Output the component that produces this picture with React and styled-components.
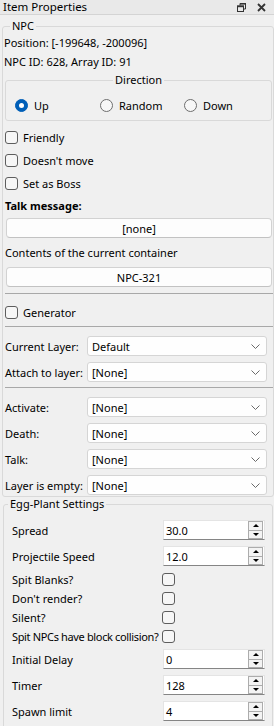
import React from 'react';
import styled, { createGlobalStyle } from 'styled-components';

const Global = createGlobalStyle`
  html, body { margin: 0; padding: 0; background: #f0f0f0; }
  body { font-family: "Noto Sans", "Open Sans", sans-serif; font-size: 11px; color: #000; }
  * { box-sizing: border-box; }
`;

const Panel = styled.div`
  width: 274px;
  height: 726px;
  overflow: hidden;
  background: #f0f0f0;
  display: flex;
  flex-direction: column;
`;

const TitleBar = styled.div`
  flex: none;
  height: 15px;
  display: flex;
  align-items: center;
  padding: 0 3px 0 3px;
  background: #e9e9e9;
  border-bottom: 1px solid #d4d4d4;
  font-size: 11.5px;
  line-height: 14px;
`;

const TitleText = styled.span`
  flex: 1;
  white-space: nowrap;
`;

const TitleButton = styled.span`
  width: 20px;
  height: 14px;
  display: flex;
  align-items: center;
  justify-content: center;
`;

const Content = styled.div`
  display: flex;
  flex-direction: column;
  padding: 4px 0 0 2px;
`;

const GroupBox = styled.fieldset`
  margin: ${p => p.$margin || '0'};
  padding: ${p => p.$pad || '0'};
  border: 1px solid #d9d9d9;
  border-radius: 3px;
  min-width: 0;
  display: flex;
  flex-direction: column;
`;

const Legend = styled.legend`
  padding: 0 2px;
  margin-left: ${p => (p.$center ? 'auto' : p.$offset || '5px')};
  margin-right: ${p => (p.$center ? 'auto' : '0')};
  line-height: 14px;
  font-size: 11px;
`;

const TextRow = styled.div`
  height: ${p => p.$h || 19}px;
  margin-top: ${p => p.$mt || 0}px;
  display: flex;
  align-items: center;
  white-space: nowrap;
  font-weight: ${p => (p.$bold ? 700 : 400)};
  margin-left: ${p => p.$ml || 0}px;
`;

const RadioRow = styled.div`
  display: grid;
  grid-template-columns: 85px 84px 84px;
  height: 33px;
  padding: 3px 0 0 9px;
  align-items: center;
`;

const Choice = styled.label`
  display: flex;
  align-items: center;
  gap: ${p => p.$gap || 6}px;
  white-space: nowrap;
`;

const RadioCircle = styled.span`
  width: 13px;
  height: 13px;
  border-radius: 50%;
  flex: none;
  display: flex;
  align-items: center;
  justify-content: center;
  background: ${p => (p.$on ? '#005fb8' : '#f7f7f7')};
  border: 1px solid ${p => (p.$on ? '#005fb8' : '#6e6e6e')};
  &::after {
    content: '';
    display: ${p => (p.$on ? 'block' : 'none')};
    width: 5px;
    height: 5px;
    border-radius: 50%;
    background: #fff;
  }
`;

const CheckBox = styled.span`
  width: 13px;
  height: 13px;
  flex: none;
  border-radius: 3px;
  border: 1px solid #5d5d5d;
  background: #f6f6f6;
`;

const CheckRow = styled.div`
  height: ${p => p.$h || 23}px;
  margin-top: ${p => p.$mt || 0}px;
  display: flex;
  align-items: center;
`;

const PushButton = styled.div`
  height: 20px;
  margin: ${p => p.$mt || 0}px 1px 0 1px;
  display: flex;
  align-items: center;
  justify-content: center;
  background: #fdfdfd;
  border: 1px solid #d2d2d2;
  border-bottom-color: #c2c2c2;
  border-radius: 4px;
`;

const Separator = styled.div`
  height: 1px;
  margin-top: ${p => p.$mt || 0}px;
  background: #a8a8a8;
`;

const FormGrid = styled.div`
  display: grid;
  grid-template-columns: 82px 180px;
  row-gap: 6px;
  margin-top: ${p => p.$mt || 0}px;
  align-items: center;
`;

const FormLabel = styled.span`
  white-space: nowrap;
`;

const Combo = styled.div`
  height: 20px;
  display: flex;
  align-items: center;
  padding: 0 6px 0 4px;
  background: #fefefe;
  border: 1px solid #d5d5d5;
  border-radius: 3px;
  span { flex: 1; }
`;

const EggGrid = styled.div`
  display: grid;
  grid-template-columns: 151px 102px;
  padding-left: 8px;
  margin-top: ${p => p.$mt || 0}px;
  row-gap: ${p => p.$gap || 0}px;
  align-items: center;
`;

const EggLabel = styled.span`
  white-space: nowrap;
  height: ${p => p.$h || 20}px;
  display: flex;
  align-items: center;
  letter-spacing: ${p => p.$tight ? '-0.35px' : 'normal'};
`;

const SpinBox = styled.div`
  height: 20px;
  display: flex;
  align-items: center;
  background: #fff;
  border: 1px solid #e4e4e4;
  border-bottom: 1px solid #858585;
  padding: 0 0 0 2px;
  span { flex: 1; }
`;

const SpinButtons = styled.div`
  width: 15px;
  height: 18px;
  margin-right: 1px;
  display: flex;
  flex-direction: column;
`;

const SpinBtn = styled.div`
  flex: 1;
  display: flex;
  align-items: center;
  justify-content: center;
  border: 1px solid #acacac;
  background: #f3f3f3;
  & + & { border-top: none; }
  &::after {
    content: '';
    width: 0;
    height: 0;
    border-left: 3px solid transparent;
    border-right: 3px solid transparent;
    ${p => (p.$down ? 'border-top: 3px solid #000;' : 'border-bottom: 3px solid #000;')}
  }
`;

const CheckCell = styled.div`
  height: 19px;
  display: flex;
  align-items: center;
  margin-left: -1px;
`;

const Chevron = () => (
  <svg width="9" height="5" viewBox="0 0 9 5">
    <path d="M0.5 0.5 L4.5 4.5 L8.5 0.5" fill="none" stroke="#6a6a6a" strokeWidth="1" />
  </svg>
);

const FloatIcon = () => (
  <svg width="9" height="9" viewBox="0 0 9 9">
    <path d="M3 2.5 V0.5 H8.5 V6 H6.5" fill="none" stroke="#333" strokeWidth="1" />
    <rect x="3" y="0" width="6" height="1.6" fill="#333" />
    <rect x="0.5" y="3" width="6" height="5.5" fill="none" stroke="#333" strokeWidth="1" />
    <rect x="0" y="2.6" width="7" height="1.6" fill="#333" />
  </svg>
);

const CloseIcon = () => (
  <svg width="9" height="9" viewBox="0 0 9 9">
    <path d="M1 1 L8 8 M8 1 L1 8" stroke="#333" strokeWidth="1.8" />
  </svg>
);

const Spin = ({ value }) => (
  <SpinBox>
    <span>{value}</span>
    <SpinButtons>
      <SpinBtn />
      <SpinBtn $down />
    </SpinButtons>
  </SpinBox>
);

const ComboBox = ({ value }) => (
  <Combo>
    <span>{value}</span>
    <Chevron />
  </Combo>
);

const Check = ({ label, mt }) => (
  <CheckRow $mt={mt}>
    <Choice $gap={5}>
      <CheckBox />
      {label}
    </Choice>
  </CheckRow>
);

export default function App() {
  return (
    <Panel>
      <Global />
      <TitleBar>
        <TitleText>Item Properties</TitleText>
        <TitleButton><FloatIcon /></TitleButton>
        <TitleButton><CloseIcon /></TitleButton>
      </TitleBar>
      <Content>
        <GroupBox $pad="0 0 1px 2px">
          <Legend>NPC</Legend>
          <TextRow $ml={-1}>Position: [-199648, -200096]</TextRow>
          <TextRow $ml={-1}>NPC ID: 628, Array ID: 91</TextRow>
          <GroupBox $margin="2px 1px 0 0">
            <Legend $center>Direction</Legend>
            <RadioRow>
              <Choice><RadioCircle $on />Up</Choice>
              <Choice><RadioCircle />Random</Choice>
              <Choice><RadioCircle />Down</Choice>
            </RadioRow>
          </GroupBox>
          <Check label="Friendly" mt={5} />
          <Check label="Doesn't move" />
          <Check label="Set as Boss" />
          <TextRow $h={20} $bold>Talk message:</TextRow>
          <PushButton $mt={3}>[none]</PushButton>
          <TextRow $h={20} $mt={4}>Contents of the current container</TextRow>
          <PushButton $mt={5}>NPC-321</PushButton>
          <Separator $mt={6} />
          <Check label="Generator" mt={7} />
          <Separator $mt={2} />
          <FormGrid $mt={9}>
            <FormLabel>Current Layer:</FormLabel>
            <ComboBox value="Default" />
            <FormLabel>Attach to layer:</FormLabel>
            <ComboBox value="[None]" />
          </FormGrid>
          <Separator $mt={5} />
          <FormGrid $mt={9}>
            <FormLabel>Activate:</FormLabel>
            <ComboBox value="[None]" />
            <FormLabel>Death:</FormLabel>
            <ComboBox value="[None]" />
            <FormLabel>Talk:</FormLabel>
            <ComboBox value="[None]" />
            <FormLabel>Layer is empty:</FormLabel>
            <ComboBox value="[None]" />
          </FormGrid>
        </GroupBox>
        <GroupBox $margin="0 1px 0 1px" $pad="0 0 20px 0">
          <Legend $offset="4px">Egg-Plant Settings</Legend>
          <EggGrid $mt={9} $gap={6}>
            <EggLabel>Spread</EggLabel>
            <Spin value="30.0" />
            <EggLabel>Projectile Speed</EggLabel>
            <Spin value="12.0" />
          </EggGrid>
          <EggGrid $mt={4}>
            <EggLabel $h={19}>Spit Blanks?</EggLabel>
            <CheckCell><CheckBox /></CheckCell>
            <EggLabel $h={19}>Don't render?</EggLabel>
            <CheckCell><CheckBox /></CheckCell>
            <EggLabel $h={19}>Silent?</EggLabel>
            <CheckCell><CheckBox /></CheckCell>
            <EggLabel $h={19} $tight>Spit NPCs have block collision?</EggLabel>
            <CheckCell><CheckBox /></CheckCell>
          </EggGrid>
          <EggGrid $mt={3} $gap={6}>
            <EggLabel>Initial Delay</EggLabel>
            <Spin value="0" />
            <EggLabel>Timer</EggLabel>
            <Spin value="128" />
            <EggLabel>Spawn limit</EggLabel>
            <Spin value="4" />
          </EggGrid>
        </GroupBox>
      </Content>
    </Panel>
  );
}
